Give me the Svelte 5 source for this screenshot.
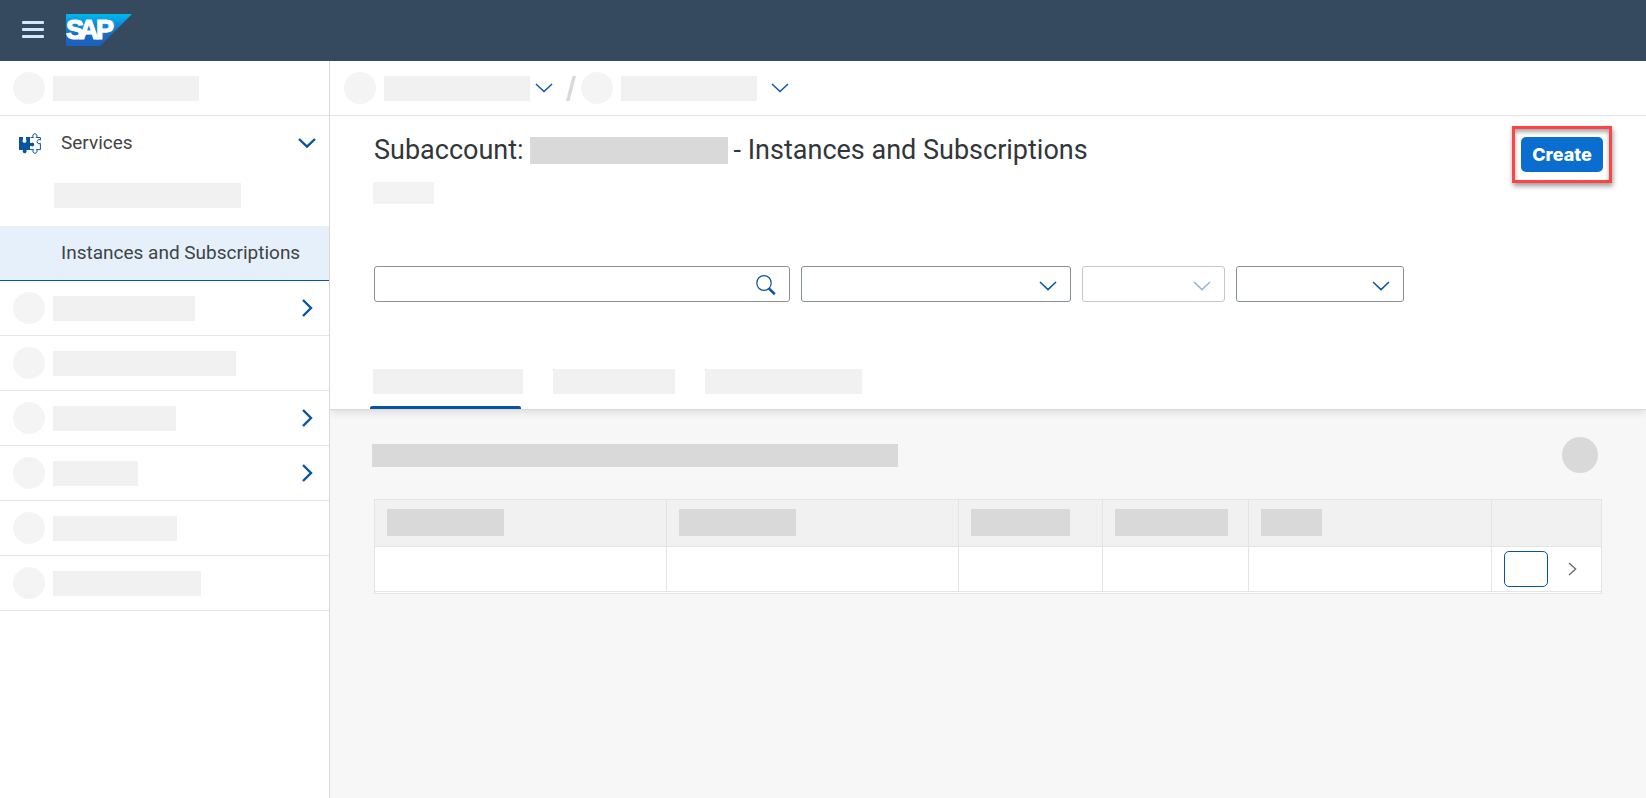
<script>
  const sideItems = [
    { width: 142, expandable: true },
    { width: 183, expandable: false },
    { width: 123, expandable: true },
    { width: 85, expandable: true },
    { width: 124, expandable: false },
    { width: 148, expandable: false }
  ];
  const filters = [
    { name: 'Service', width: 270, disabled: false },
    { name: 'Plan', width: 143, disabled: true },
    { name: 'Status', width: 168, disabled: false }
  ];
  const tabs = [150, 122, 157];
  const columns = [
    { share: 23.8, bar: 117 },
    { share: 23.8, bar: 117 },
    { share: 11.8, bar: 99 },
    { share: 11.9, bar: 113 },
    { share: 19.8, bar: 61 }
  ];
  let activeTab = $state(0);
</script>

{#snippet down(weight)}
  <svg class="down" width="18" height="10" viewBox="0 0 18 10" aria-hidden="true">
    <path d="M1 1 L9 8.6 L17 1" fill="none" stroke="currentColor" stroke-width={weight} />
  </svg>
{/snippet}

<div class="app">
  <header class="shell">
    <button class="menu" aria-label="Toggle navigation">
      <svg width="22" height="17" viewBox="0 0 22 17" aria-hidden="true">
        <g fill="#d1e8ff">
          <rect width="22" height="3" rx="1" />
          <rect y="7" width="22" height="3" rx="1" />
          <rect y="14" width="22" height="3" rx="1" />
        </g>
      </svg>
    </button>
    <svg class="logo" width="66" height="32" viewBox="0 0 66 32" role="img" aria-label="SAP">
      <defs>
        <linearGradient id="sap" x1="0" y1="0" x2="0" y2="1">
          <stop offset="0" stop-color="#00b8f1" />
          <stop offset="0.3" stop-color="#0d90d9" />
          <stop offset="0.7" stop-color="#1a68c4" />
          <stop offset="1" stop-color="#1e5fbb" />
        </linearGradient>
      </defs>
      <path d="M0 0H66L34 32H0Z" fill="url(#sap)" />
      <text x="0 13 30" y="25.3" class="mark">SAP</text>
    </svg>
  </header>

  <div class="body">
    <nav class="side" aria-label="Account navigation">
      <div class="row line"><span class="dot"></span><span class="bar" style="width: 146px"></span></div>
      <button class="row services">
        <svg class="puzzle" width="24" height="24" viewBox="0 0 24 24" aria-hidden="true">
          <path d="M1 6H5V8.4A2 2 0 1 0 8 8.4V6H12V12H13.2A1.9 1.9 0 1 1 13.2 15H12V19H8.3A2 2 0 1 1 5 19H1Z" fill="#0854a0" />
          <path d="M12.6 6.5H15.6A2.1 2.1 0 1 1 18.2 6.5H22.4V9A2.1 2.1 0 1 0 22.4 12.4V18.6H18.4A2.1 2.1 0 1 1 15.6 18.6H12" fill="none" stroke="#0854a0" stroke-width="1" />
        </svg>
        <span class="label">Services</span>
        {@render down(2.4)}
      </button>
      <div class="row sub"><span class="bar" style="width: 187px"></span></div>
      <a class="row selected" href="#instances">Instances and Subscriptions</a>
      {#each sideItems as item}
        <div class="row line">
          <span class="dot"></span>
          <span class="bar" style="width: {item.width}px"></span>
          {#if item.expandable}
            <button class="expand" aria-label="Expand">
              <svg width="11" height="18" viewBox="0 0 11 18" aria-hidden="true">
                <path d="M1 1L9 9L1 17" fill="none" stroke="currentColor" stroke-width="2.4" />
              </svg>
            </button>
          {/if}
        </div>
      {/each}
    </nav>

    <main>
      <div class="crumbs">
        <span class="dot"></span>
        <span class="bar" style="width: 146px"></span>
        <button class="crumb" aria-label="Switch account">{@render down(1.4)}</button>
        <svg class="slash" width="10" height="25" viewBox="0 0 10 25" aria-hidden="true">
          <path d="M0 25L6.5 0H10L3.5 25Z" fill="#d9d9d9" />
        </svg>
        <span class="dot"></span>
        <span class="bar" style="width: 136px"></span>
        <button class="crumb far" aria-label="Switch subaccount">{@render down(1.4)}</button>
      </div>

      <section class="head">
        <div class="top">
          <div>
            <h1>Subaccount: <span class="name"></span> - Instances and Subscriptions</h1>
            <div class="caption"></div>
          </div>
          <div class="callout"><button class="create">Create</button></div>
        </div>

        <div class="filters">
          <div class="search">
            <input type="search" aria-label="Search" />
            <svg width="20" height="20" viewBox="0 0 20 20" aria-hidden="true">
              <ellipse cx="8" cy="8" rx="7.2" ry="7.4" fill="none" stroke="#0854a0" stroke-width="1.2" />
              <path d="M12.8 13.4L18.8 19.2" stroke="#0854a0" stroke-width="2.6" />
            </svg>
          </div>
          {#each filters as f}
            <div class="pick" class:off={f.disabled} style="width: {f.width}px">
              <select aria-label={f.name} disabled={f.disabled}></select>
              {@render down(1.5)}
            </div>
          {/each}
        </div>

        <div class="tabs" role="tablist">
          {#each tabs as width, i}
            <button
              role="tab"
              aria-label="Tab {i + 1}"
              aria-selected={activeTab === i}
              class:active={activeTab === i}
              onclick={() => (activeTab = i)}
            ><span class="bar" style="width: {width}px"></span></button>
          {/each}
        </div>
      </section>

      <section class="content">
        <div class="toolbar"><span class="heading"></span><span class="round"></span></div>
        <table>
          <colgroup>
            {#each columns as c}<col style="width: {c.share}%" />{/each}
            <col />
          </colgroup>
          <thead>
            <tr>
              {#each columns as c}<th><span class="th" style="width: {c.bar}px"></span></th>{/each}
              <th></th>
            </tr>
          </thead>
          <tbody>
            <tr>
              {#each columns as _}<td></td>{/each}
              <td>
                <div class="actions">
                  <button class="action" aria-label="Action"></button>
                  <button class="open" aria-label="Open details">
                    <svg width="9" height="14" viewBox="0 0 9 14" aria-hidden="true">
                      <path d="M1 1L7.6 7L1 13" fill="none" stroke="#6a6d70" stroke-width="1.4" />
                    </svg>
                  </button>
                </div>
              </td>
            </tr>
          </tbody>
        </table>
      </section>
    </main>
  </div>
</div>

<style>
  :global(body) {
    background: #f7f7f7;
  }
  .app {
    display: flex;
    flex-direction: column;
    min-height: 100vh;
    font-family: Roboto, 'Liberation Sans', sans-serif;
    color: #32363a;
  }
  .app * {
    box-sizing: border-box;
  }
  button {
    padding: 0;
    border: 0;
    background: none;
    font: inherit;
    color: inherit;
    cursor: pointer;
  }
  svg {
    display: block;
    flex: none;
  }
  .shell {
    display: flex;
    align-items: center;
    gap: 22px;
    height: 61px;
    padding: 0 22px 2px;
    background: #354a5f;
  }
  .mark {
    font: 700 27px 'Liberation Sans', sans-serif;
    fill: #fff;
    stroke: #fff;
    stroke-width: 1.2;
  }
  .body {
    display: grid;
    grid-template-columns: 330px minmax(0, 1fr);
    flex: 1;
  }
  .side {
    background: #fff;
    border-right: 1px solid #d9d9d9;
    color: #3f4347;
    font-size: 19px;
    line-height: 24px;
  }
  .row {
    display: flex;
    align-items: center;
    width: 100%;
    height: 55px;
    padding: 0 13px;
    text-align: left;
  }
  .line {
    border-bottom: 1px solid #e4e4e4;
  }
  .dot {
    flex: none;
    width: 32px;
    height: 32px;
    margin-right: 8px;
    border-radius: 50%;
    background: #f4f4f4;
  }
  .bar {
    display: block;
    height: 25px;
    background: #f1f1f1;
  }
  .services {
    padding: 0 13px 2px 18px;
  }
  .label {
    margin-left: 19px;
    flex: 1;
  }
  .side .down,
  .expand {
    color: #0854a0;
  }
  .expand {
    margin: 0 3px 0 auto;
  }
  .sub {
    padding: 0 0 6px 54px;
  }
  .selected {
    padding: 0 0 0 61px;
    background: #e5f0fa;
    border-bottom: 1px solid #0854a0;
    color: inherit;
    text-decoration: none;
  }
  main {
    min-width: 0;
  }
  .crumbs {
    display: flex;
    align-items: center;
    height: 55px;
    padding-left: 14px;
    background: #fff;
    border-bottom: 1px solid #e4e4e4;
  }
  .crumb {
    margin-left: 5px;
    color: #0854a0;
  }
  .far {
    margin-left: 14px;
  }
  .slash {
    margin: 0 5px 0 13px;
  }
  .head {
    padding: 10px 44px 0;
    background: #fff;
    border-bottom: 1px solid #d9d9d9;
    box-shadow: 0 2px 8px rgba(0, 0, 0, 0.12);
    clip-path: inset(0 0 -12px 0);
  }
  .top {
    display: flex;
    justify-content: space-between;
    align-items: flex-start;
    margin-right: -10px;
  }
  h1 {
    display: flex;
    align-items: center;
    gap: 6px;
    margin: 10px 0 18px;
    font-size: 27px;
    font-weight: 400;
    line-height: 28px;
    white-space: nowrap;
  }
  .name {
    width: 198px;
    height: 27px;
    background: #d9d9d9;
  }
  .caption {
    width: 61px;
    height: 22px;
    margin-left: -1px;
    background: #f3f3f3;
  }
  .callout {
    padding: 8px 6px;
    border: 3px solid #fb4444;
    box-shadow: 1px 3px 5px rgba(0, 0, 0, 0.4), inset 0 3px 4px rgba(0, 0, 0, 0.35);
  }
  .create {
    display: block;
    width: 82px;
    height: 35px;
    border-radius: 5px;
    background: #0a6ed1;
    color: #fff;
    font: 800 18px/35px Inter, sans-serif;
  }
  .filters {
    display: flex;
    gap: 11px;
    margin-top: 62px;
  }
  .search {
    position: relative;
    width: 416px;
  }
  .search svg {
    position: absolute;
    right: 14px;
    top: 9px;
  }
  input,
  select {
    display: block;
    width: 100%;
    height: 36px;
    margin: 0;
    padding: 0 44px 0 12px;
    appearance: none;
    border: 1px solid #89919a;
    border-radius: 3px;
    background: #fff;
    font: inherit;
  }
  select:disabled {
    opacity: 1;
    border-color: #c4c8cc;
  }
  .pick {
    position: relative;
    color: #0854a0;
  }
  .pick :global(.down) {
    position: absolute;
    right: 14px;
    top: 15px;
    pointer-events: none;
  }
  .off {
    color: #94b6d6;
  }
  .tabs {
    display: flex;
    gap: 27px;
    margin: 67px 0 0 -4px;
  }
  .tabs button {
    position: relative;
    padding: 0 0 15px 3px;
  }
  .active::after {
    content: '';
    position: absolute;
    left: 0;
    right: 2px;
    bottom: 0;
    height: 3px;
    border-radius: 2px 2px 0 0;
    background: #0854a0;
  }
  .content {
    padding: 27px 44px;
  }
  .toolbar {
    display: flex;
    justify-content: space-between;
    align-items: center;
    margin: 0 4px 26px -2px;
  }
  .heading {
    width: 526px;
    height: 23px;
    background: #d9d9d9;
  }
  .round {
    width: 36px;
    height: 36px;
    border-radius: 50%;
    background: #d9d9d9;
  }
  table {
    width: 100%;
    table-layout: fixed;
    border-collapse: separate;
    border-spacing: 0;
    border: 1px solid #e4e4e4;
    padding-bottom: 1px;
    background: #fff;
  }
  th,
  td {
    padding: 0 0 0 12px;
    border-right: 1px solid #e4e4e4;
    border-bottom: 1px solid #e4e4e4;
  }
  th:last-child,
  td:last-child {
    border-right: 0;
  }
  th {
    height: 47px;
    padding-bottom: 2px;
    background: #f1f1f1;
  }
  td {
    height: 45px;
  }
  .th {
    display: block;
    height: 27px;
    background: #d9d9d9;
  }
  .actions {
    display: flex;
    align-items: center;
    gap: 20px;
  }
  .action {
    width: 44px;
    height: 36px;
    border: 1px solid #0854a0;
    border-radius: 5px;
    background: #fff;
  }
</style>
